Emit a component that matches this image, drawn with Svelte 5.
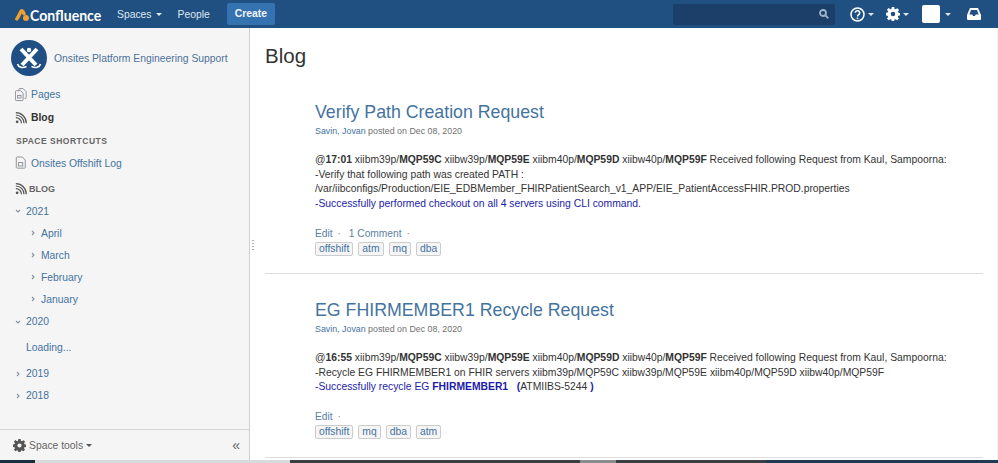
<script lang="ts">
	const months = ['April', 'March', 'February', 'January'];
	const posts = [
		{
			title: 'Verify Path Creation Request',
			time: '17:01',
			comment: '1 Comment',
			tags: ['offshift', 'atm', 'mq', 'dba']
		},
		{
			title: 'EG FHIRMEMBER1 Recycle Request',
			time: '16:55',
			comment: '',
			tags: ['offshift', 'mq', 'dba', 'atm']
		}
	];
</script>

{#snippet rss()}
	<svg width="12" height="12" viewBox="0 0 14 14" fill="none" stroke="#555" stroke-width="1.4">
		<circle cx="2.5" cy="11.5" r="1.6" fill="#555" stroke="none" />
		<path d="M1 6.5a6.5 6.5 0 0 1 6.5 6.5" />
		<path d="M1 3.5a9.5 9.5 0 0 1 9.5 9.5" />
		<path d="M1 .8a12.2 12.2 0 0 1 12.2 12.2" />
	</svg>
{/snippet}

{#snippet chevron(open = false)}
	<svg class="chev" width="8" height="8" viewBox="0 0 8 8" fill="none" stroke="#8a93a0" stroke-width="1.1">
		{#if open}
			<path d="M2 3l2 2 2-2" />
		{:else}
			<path d="M3 2l2 2-2 2" />
		{/if}
	</svg>
{/snippet}

{#snippet caret()}
	<span class="caret"></span>
{/snippet}

{#snippet cog(size = 16, color = '#fff')}
	<svg width={size} height={size} viewBox="0 0 16 16" fill={color}>
		<path fill-rule="evenodd" d="M6.600 0h2.800l.4 2.200 1.200.5L12.900 1.400l2 2-1.300 1.900.5 1.200 1.900.4v2.800l-2 .4-.5 1.200 1.300 1.900-2 2-1.900-1.300-1.200.5-.4 2.100H6.600l-.4-2.100-1.200-.5-1.900 1.300-2-2 1.300-1.900-.5-1.200-1.900-.4V6.700l1.900-.4.5-1.200-1.300-1.900 2-2L5 2.700l1.200-.5zM8 5.400a2.600 2.600 0 1 0 0 5.200 2.600 2.600 0 0 0 0-5.200z" />
	</svg>
{/snippet}

<div class="page">
	<header class="topbar">
		<div class="logo">
			<svg width="14" height="13" viewBox="0 0 14 13" fill="none">
				<path d="M1.800 11C3.400 9 4.400 6 5.800 3.500 6.400 2.300 7.200 2.300 7.800 3.400l1.200 2.400" stroke="#f0a030" stroke-width="3.400" stroke-linecap="round" />
				<circle cx="11" cy="10" r="3" fill="#f0a030" />
			</svg>
			<span class="wordmark">Confluence</span>
		</div>
		<nav class="menu">
			<span class="item">Spaces {@render caret()}</span>
			<span class="item people">People</span>
			<span class="create">Create</span>
		</nav>
		<div class="tools">
			<div class="search">
				<svg width="10" height="10" viewBox="0 0 10 10" fill="none" stroke="#9fb4cc" stroke-width="1.800">
					<circle cx="4" cy="4" r="3" />
					<path d="M6.200 6.200L9.300 9.300" />
				</svg>
			</div>
			<span class="tool help">
				<svg width="15" height="15" viewBox="0 0 15 15" fill="none" stroke="#fff" stroke-width="1.500">
					<circle cx="7.500" cy="7.500" r="6.500" />
					<path d="M5.300 5.800a2.200 2.200 0 1 1 3.400 1.900c-.8.500-1.200.9-1.200 1.800" />
					<circle cx="7.500" cy="11.300" r=".9" fill="#fff" stroke="none" />
				</svg>
				{@render caret()}
			</span>
			<span class="tool gear">{@render cog(14)}{@render caret()}</span>
			<span class="tool user"><span class="avatar"></span>{@render caret()}</span>
			<svg class="inbox" width="14" height="12" viewBox="0 0 14 12" fill="#fff">
				<path fill-rule="evenodd" d="M3 0h8l3 7v4a1 1 0 0 1-1 1H1a1 1 0 0 1-1-1V7zm1 2L2.300 6.500h3l.7 1.500h2l.7-1.500h3L10 2z" />
			</svg>
		</div>
	</header>

	<div class="body">
		<aside class="sidebar">
			<div class="side-scroll">
				<div class="space">
					<svg class="space-logo" width="36" height="36" viewBox="0 0 36 36">
						<circle cx="18" cy="18" r="18" fill="#1f4f85" />
						<path d="M10 9l15 16M26 9L11 25" stroke="#fff" stroke-width="4" fill="none" />
						<circle cx="18" cy="10" r="2.200" fill="#fff" />
						<path d="M6.500 24c1 3.500 5 4.500 9 2.500M29.500 24c-1 3.500-5 4.500-9 2.500" fill="none" stroke="#fff" stroke-width="1.600" />
					</svg>
					<a class="space-name">Onsites Platform Engineering Support</a>
				</div>

				<div class="nav-row">
					<svg width="12" height="14" viewBox="0 0 14 16" fill="none" stroke="#8b8f96" stroke-width="1.100">
						<path d="M4.500 2.500V1.500a1 1 0 0 1 1-1h4l3.500 3.500v7a1 1 0 0 1-1 1h-1" />
						<path d="M1.500 3h5l3 3v7.500a1 1 0 0 1-1 1h-7a1 1 0 0 1-1-1V4a1 1 0 0 1 1-1z" />
						<rect x="3" y="8.500" width="4" height="3" />
					</svg>
					<a>Pages</a>
				</div>
				<div class="nav-row current">
					{@render rss()}
					<span>Blog</span>
				</div>

				<h5 class="shortcuts">SPACE SHORTCUTS</h5>
				<div class="nav-row">
					<svg width="12" height="14" viewBox="0 0 14 16" fill="none" stroke="#8b8f96" stroke-width="1.100">
						<path d="M2.500 1h6l3.500 3.500V13a1 1 0 0 1-1 1H2.500a1 1 0 0 1-1-1V2a1 1 0 0 1 1-1z" />
						<rect x="4" y="7.500" width="5" height="4" />
					</svg>
					<a>Onsites Offshift Log</a>
				</div>

				<div class="blog-head">
					{@render rss()}
					<span>BLOG</span>
				</div>

				<ul class="tree">
					<li class="year">{@render chevron(true)}<a>2021</a></li>
					{#each months as month}
						<li class="month">{@render chevron()}<a>{month}</a></li>
					{/each}
					<li class="year">{@render chevron(true)}<a>2020</a></li>
					<li class="loading"><a>Loading...</a></li>
					<li class="year">{@render chevron()}<a>2019</a></li>
					<li class="year">{@render chevron()}<a>2018</a></li>
				</ul>
			</div>

			<footer class="side-foot">
				<span class="space-tools">{@render cog(13, '#555')}<span>Space tools</span><span class="caret dark"></span></span>
				<span class="collapse">«</span>
			</footer>
			<span class="grip"></span>
		</aside>

		<main class="content">
			<h1>Blog</h1>
			{#each posts as post, i}
				<article class="post">
					<h2><a>{post.title}</a></h2>
					<div class="byline"><a>Savin, Jovan</a> posted on Dec 08, 2020</div>
					<div class="text">
						<p>
							@<b>{post.time}</b> xiibm39p/<b>MQP59C</b> xiibw39p/<b>MQP59E</b> xiibm40p/<b>MQP59D</b> xiibw40p/<b>MQP59F</b> Received following Request from Kaul, Sampoorna:
						</p>
						{#if i === 0}
							<p>-Verify that following path was created PATH :</p>
							<p>/var/iibconfigs/Production/EIE_EDBMember_FHIRPatientSearch_v1_APP/EIE_PatientAccessFHIR.PROD.properties</p>
							<p class="blue">-Successfully performed checkout on all 4 servers using CLI command.</p>
						{:else}
							<p>-Recycle EG FHIRMEMBER1 on FHIR servers xiibm39p/MQP59C xiibw39p/MQP59E xiibm40p/MQP59D xiibw40p/MQP59F</p>
							<p class="blue">-Successfully recycle EG <b>FHIRMEMBER1</b> &nbsp; <b>(</b><span class="ticket">ATMIIBS-5244</span> <b>)</b></p>
						{/if}
					</div>
					<div class="actions">
						<a>Edit</a><span class="dot">·</span>
						{#if post.comment}<a>{post.comment}</a><span class="dot">·</span>{/if}
					</div>
					<div class="tags">
						{#each post.tags as tag}
							<span class="tag">{tag}</span>
						{/each}
					</div>
				</article>
			{/each}
		</main>
	</div>
	<div class="taskbar">
		<span class="seg-a"></span>
		<span class="seg-b"></span>
		<span class="seg-c"></span>
		<span class="seg-d"></span>
		<span class="seg-c"></span>
		<span class="seg-e"></span>
	</div>
</div>

<style>
	:global(body) {
		margin: 0;
		background: #fff;
		overflow: hidden;
	}

	.page {
		width: 998px;
		height: 463px;
		display: flex;
		flex-direction: column;
		overflow: hidden;
		font-family: 'Liberation Sans', Arial, sans-serif;
		font-size: 10.35px;
		color: #333;
	}

	a {
		color: #44739f;
	}

	.topbar {
		flex: 0 0 28px;
		display: flex;
		align-items: center;
		background: #205081;
		color: #fff;
		padding-left: 15px;
	}

	.logo {
		display: flex;
		align-items: center;
		gap: 1px;
		font-family: Lato, sans-serif;
		font-weight: 700;
		font-size: 16px;
		width: 102px;
	}

	.wordmark {
		transform: scaleX(0.88);
		transform-origin: left center;
	}

	.menu {
		display: flex;
		align-items: center;
		color: #dfe7f0;
	}

	.item {
		display: inline-flex;
		align-items: center;
		gap: 4px;
	}

	.people {
		margin-left: 16px;
	}

	.create {
		margin-left: 17px;
		background: #3572b0;
		color: #f2f6fa;
		font-weight: 700;
		padding: 0 8px;
		height: 22px;
		line-height: 22px;
		border-radius: 2px;
	}

	.caret {
		display: inline-block;
		width: 0;
		height: 0;
		border-left: 3px solid transparent;
		border-right: 3px solid transparent;
		border-top: 3px solid #dfe7f0;
	}

	.caret.dark {
		border-top-color: #555;
	}

	.tools {
		margin-left: auto;
		display: flex;
		align-items: center;
		padding-right: 17px;
	}

	.search {
		width: 162px;
		height: 21px;
		background: #1b3f68;
		border-radius: 2px;
		display: flex;
		align-items: center;
		justify-content: flex-end;
		padding-right: 6px;
		box-sizing: border-box;
		margin-right: 15px;
	}

	.tool {
		display: inline-flex;
		align-items: center;
		gap: 3px;
	}

	.gear {
		margin-left: 12px;
	}

	.user {
		margin-left: 13px;
		gap: 5px;
	}

	.avatar {
		width: 18px;
		height: 18px;
		background: #fff;
		border-radius: 2px;
	}

	.inbox {
		margin-left: 16px;
	}

	.body {
		flex: 1;
		display: flex;
		min-height: 0;
	}

	.sidebar {
		position: relative;
		width: 250px;
		box-sizing: border-box;
		background: #f5f5f5;
		border-right: 1px solid #d0d0d0;
		display: flex;
		flex-direction: column;
	}

	.grip {
		position: absolute;
		left: 252px;
		top: 212px;
		width: 2px;
		height: 10px;
		background: repeating-linear-gradient(#aaa 0 1px, transparent 1px 3px);
	}

	.side-scroll {
		flex: 1;
		min-height: 0;
		padding: 12px 0 0 11px;
	}

	.space {
		display: flex;
		align-items: center;
		gap: 7px;
		margin-bottom: 7px;
	}

	.space-logo {
		flex: none;
	}

	.space-name {
		color: #4e7299;
	}

	.nav-row {
		display: flex;
		align-items: center;
		gap: 4px;
		height: 23px;
		padding-left: 4px;
	}

	.current {
		font-weight: 700;
		color: #333;
	}

	.shortcuts {
		margin: 5.5px 0 4px 5px;
		font-size: 8.5px;
		font-weight: 700;
		letter-spacing: 0.5px;
		color: #666;
		line-height: 13px;
	}

	.blog-head {
		display: flex;
		align-items: center;
		gap: 2px;
		padding-left: 4px;
		margin-top: 4.5px;
		height: 20px;
		font-size: 9px;
		font-weight: 700;
		color: #666;
	}

	.tree {
		list-style: none;
		margin: 1px 0 0;
		padding: 0;
	}

	.tree li {
		display: flex;
		align-items: center;
		gap: 4px;
		height: 22.1px;
	}

	.year {
		padding-left: 3px;
	}

	.month {
		padding-left: 18px;
	}

	.tree .loading {
		padding-left: 15px;
		height: 30px;
	}

	.side-foot {
		flex: 0 0 30px;
		border-top: 1px solid #d5d5d5;
		display: flex;
		align-items: center;
		justify-content: space-between;
		padding: 0 9px 0 13px;
		color: #666;
	}

	.space-tools {
		display: inline-flex;
		align-items: center;
		gap: 3px;
	}

	.collapse {
		font-size: 14px;
		color: #666;
	}

	.content {
		flex: 1;
		min-width: 0;
		padding: 15px 0 0 15px;
		border-right: 1px solid #eef0f2;
	}

	h1 {
		margin: 0;
		font-size: 20.5px;
		font-weight: 400;
		line-height: 25px;
		color: #333;
	}

	.post {
		margin-right: 14px;
		padding: 24px 0 16.5px 50px;
		border-bottom: 1px solid #ddd;
	}

	.post:first-of-type {
		margin-top: 8px;
	}

	.post:last-of-type {
		padding-bottom: 18px;
	}

	h2 {
		margin: 0;
		font-size: 17.75px;
		font-weight: 400;
		line-height: 24px;
	}

	.byline {
		margin-top: 1px;
		font-size: 8.85px;
		line-height: 12px;
		color: #707070;
	}

	.text {
		margin-top: 16px;
		line-height: 14.7px;
		white-space: nowrap;
	}

	.text p {
		margin: 0;
	}

	.blue {
		color: #1c1ca8;
	}

	.ticket {
		color: #333;
	}

	.actions {
		margin-top: 15.5px;
		height: 14px;
		line-height: 14px;
		font-size: 10.2px;
		color: #5a7fa5;
	}

	.actions a {
		color: #5a7fa5;
	}

	.dot {
		margin: 0 5px;
		color: #888;
	}

	.tags {
		display: flex;
		gap: 5px;
		margin-top: 1px;
	}

	.tag {
		background: #f5f5f5;
		border: 1px solid #ccc;
		border-radius: 2px;
		padding: 0 3px;
		height: 12px;
		line-height: 12px;
		color: #44739f;
	}

	.taskbar {
		flex: 0 0 3px;
		display: flex;
	}

	.seg-a {
		width: 35px;
		background: #16303f;
	}

	.seg-b {
		width: 255px;
		background: #d8dadb;
	}

	.seg-c {
		width: 290px;
		background: #3a3f44;
	}

	.seg-d {
		width: 36px;
		background: #8a8c8e;
	}

	.seg-c + .seg-d + .seg-c {
		width: 150px;
	}

	.seg-e {
		flex: 1;
		background: #1f3a55;
	}
</style>
